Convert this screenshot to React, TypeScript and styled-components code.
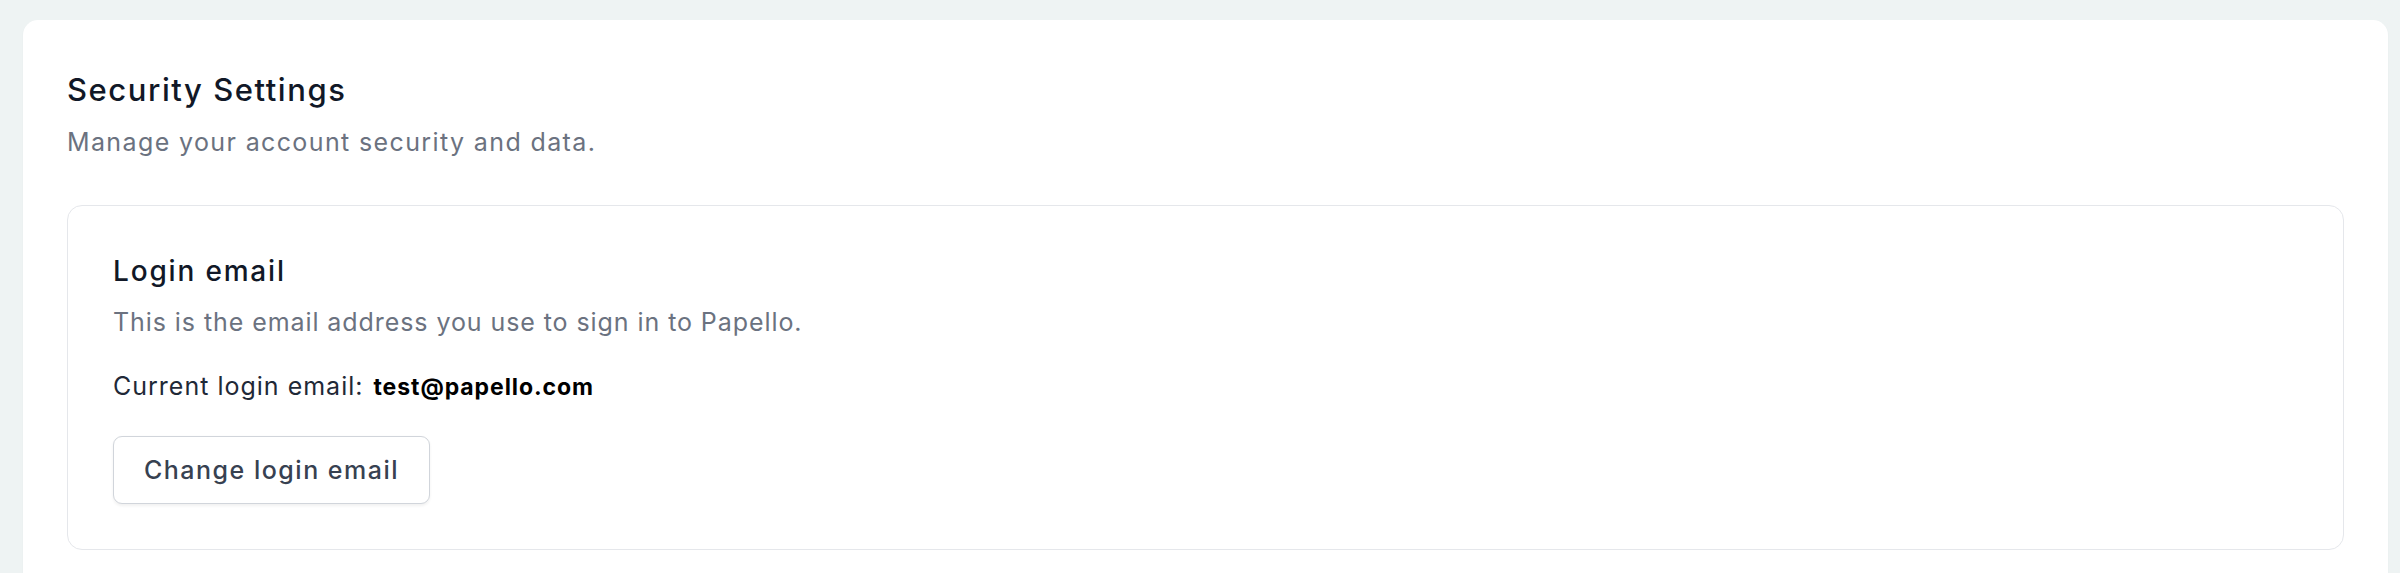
import { FC } from "react"
import styled, { createGlobalStyle } from "styled-components"

const GlobalStyle = createGlobalStyle`
	* {
		box-sizing: border-box;
	}
	html, body {
		margin: 0;
		background: #eef3f3;
		font-family: Inter, "Open Sans", sans-serif;
		-webkit-font-smoothing: antialiased;
	}
`

const App: FC = () => {
	return (
		<Page>
			<GlobalStyle />
			<SettingsCard>
				<Title>Security Settings</Title>
				<Subtitle>Manage your account security and data.</Subtitle>

				<Section>
					<SectionTitle>Login email</SectionTitle>
					<SectionText>This is the email address you use to sign in to Papello.</SectionText>
					<CurrentEmail>
						Current login email: <strong>test@papello.com</strong>
					</CurrentEmail>
					<OutlineButton type="button">Change login email</OutlineButton>
				</Section>
			</SettingsCard>
		</Page>
	)
}
export default App

const Page = styled.div`
	height: 100vh;
	overflow: hidden;
	padding: 20px 12px 0 23px;
`

const SettingsCard = styled.div`
	background: #ffffff;
	border-radius: 15px;
	padding: 49px 44px 45px 44px;
	box-shadow: 0 1px 2px rgba(16, 24, 40, 0.04);
`

const Title = styled.h1`
	margin: 0;
	font-size: 31px;
	line-height: 42px;
	font-weight: 500;
	letter-spacing: 0.05em;
	color: #111827;
`

const Subtitle = styled.p`
	margin: 13px 0 0;
	font-size: 25px;
	line-height: 36px;
	letter-spacing: 0.055em;
	color: #6b7280;
`

const Section = styled.section`
	margin-top: 45px;
	border: 1.5px solid #e5e7eb;
	border-radius: 15px;
	padding: 45px;
	display: flex;
	flex-direction: column;
	align-items: flex-start;
`

const SectionTitle = styled.h2`
	margin: 0;
	font-size: 28px;
	line-height: 40px;
	font-weight: 500;
	letter-spacing: 0.065em;
	color: #111827;
`

const SectionText = styled.p`
	margin: 13px 0 0;
	font-size: 25px;
	line-height: 36px;
	letter-spacing: 0.037em;
	color: #6b7280;
`

const CurrentEmail = styled.p`
	margin: 28px 0 0;
	font-size: 25px;
	line-height: 36px;
	letter-spacing: 0.04em;
	color: #1f2937;
	strong {
		margin-left: 2px;
		font-size: 23px;
		font-weight: 700;
		letter-spacing: 0.04em;
		color: #000000;
	}
`

const OutlineButton = styled.button`
	margin-top: 31px;
	height: 68px;
	padding: 0 30px;
	background: #ffffff;
	border: 1.5px solid #d1d5db;
	border-radius: 9px;
	box-shadow: 0 1.5px 3px rgba(0, 0, 0, 0.06);
	font-family: inherit;
	font-size: 25px;
	font-weight: 500;
	letter-spacing: 0.06em;
	color: #374151;
	cursor: pointer;
`
